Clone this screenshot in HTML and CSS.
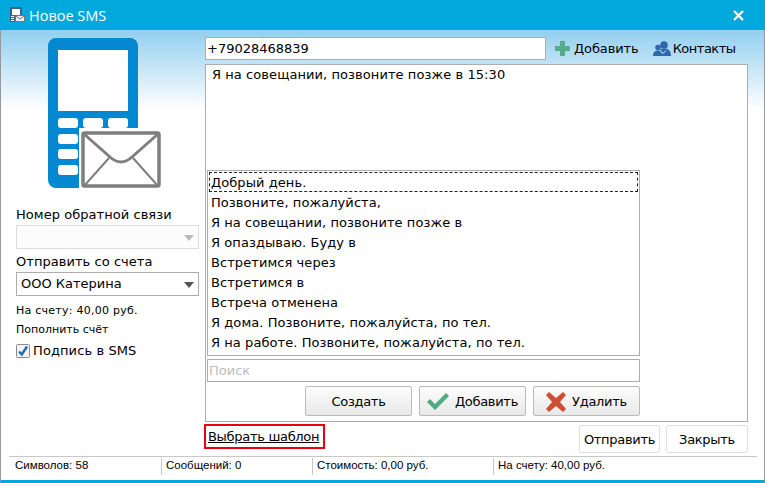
FILE: index.html
```html
<!DOCTYPE html>
<html lang="ru">
<head>
    <meta charset="UTF-8">
    <title>Новое SMS</title>
    <link rel="stylesheet" href="styles.css">
</head>
<body>
<div class="window">
    <div class="titlebar">
        <svg class="title-icon" width="16" height="16" viewBox="0 0 16 16">
            <rect x="0" y="0" width="12" height="15" rx="1" fill="#3b5f94"/>
            <rect x="2" y="2" width="8" height="6" fill="#fff"/>
            <rect x="1" y="9" width="3" height="1" fill="#fff"/>
            <rect x="1" y="11" width="3" height="1" fill="#fff"/>
            <rect x="1" y="13" width="3" height="1" fill="#fff"/>
            <rect x="5.500" y="8.500" width="9" height="6" fill="#eee" stroke="#777"/>
            <path d="M6 9l4 3 4-3" fill="none" stroke="#777"/>
        </svg>
        <span class="title-text">Новое SMS</span>
        <svg class="close-icon" width="11" height="11" viewBox="0 0 11 11">
            <path d="M1 1l9 9M10 1l-9 9" stroke="#fff" stroke-width="2.2" fill="none"/>
        </svg>
    </div>

    <div class="content">
        <div class="left-col">
            <svg class="phone-icon" width="113" height="150" viewBox="0 0 113 150">
                <path d="M8 0H82a8 8 0 0 1 8 8V142a8 8 0 0 1-8 8H8a8 8 0 0 1-8-8V8a8 8 0 0 1 8-8z" fill="#0388d1"/>
                <rect x="10" y="12" width="70" height="61" fill="#fff"/>
                <rect x="10" y="80" width="20" height="10" rx="3" fill="#fff"/>
                <rect x="35" y="80" width="20" height="10" rx="3" fill="#fff"/>
                <rect x="60" y="80" width="20" height="10" rx="3" fill="#fff"/>
                <rect x="10" y="96" width="20" height="10" rx="3" fill="#fff"/>
                <rect x="10" y="111" width="20" height="10" rx="3" fill="#fff"/>
                <rect x="10" y="127" width="20" height="10" rx="3" fill="#fff"/>
                <rect x="31" y="90" width="60" height="60" fill="#fff"/>
                <rect x="35" y="95" width="76" height="53" rx="1.500" fill="#fff" stroke="#7f7f7f" stroke-width="3.500"/>
                <path d="M36 96L62 119Q73 129 84 119L110 96" fill="none" stroke="#7f7f7f" stroke-width="3"/>
                <path d="M36 148L61 120M110 148L85 120" fill="none" stroke="#7f7f7f" stroke-width="2"/>
            </svg>

            <label class="field-label">Номер обратной связи</label>
            <div class="select select-off"><span class="arrow"></span></div>

            <label class="field-label">Отправить со счета</label>
            <div class="select">ООО Катерина<span class="arrow"></span></div>

            <div class="small-line balance">На счету: 40,00 руб.</div>
            <div class="small-line">Пополнить счёт</div>

            <div class="check-line">
                <svg width="14" height="14" viewBox="0 0 14 14">
                    <rect x="0.500" y="0.500" width="13" height="13" rx="1" fill="#f4f4f4" stroke="#8a8a8a"/>
                    <path d="M3 7.500L5.800 10.500L11 2.500" fill="none" stroke="#1f6fb5" stroke-width="2.400"/>
                </svg>
                Подпись в SMS
            </div>
        </div>

        <div class="right-col">
            <div class="phone-row">
                <input class="phone-input" type="text" value="+79028468839">
                <span class="tool-link tool-add">
                    <svg width="15" height="15" viewBox="0 0 15 15"><path d="M5 0h5v5h5v5h-5v5H5v-5H0V5h5z" fill="#56ab8a"/></svg>
                    Добавить
                </span>
                <span class="tool-link tool-contacts">
                    <svg width="18" height="16" viewBox="0 0 18 16">
                        <circle cx="11" cy="4" r="3.800" fill="#2d67ad"/>
                        <circle cx="5" cy="6.500" r="2.800" fill="#2d67ad"/>
                        <path d="M0 15c0-4 2-5.500 5-5.500s5 1.500 5 5.500z" fill="#2d67ad"/>
                        <path d="M7 8.500c1-1 7-1.500 8 0 2 1 3 3 3 6.500H10c0-3-1-5-3-6.500z" fill="#2d67ad"/>
                        <path d="M7.500 10.500l2.500 2 3-3" fill="none" stroke="#dce9f5" stroke-width="1"/>
                    </svg>
                    Контакты
                </span>
            </div>

            <div class="message-box">
                <div class="message-text">Я на совещании, позвоните позже в 15:30</div>
                <ul class="template-list">
                    <li class="selected">Добрый день.</li>
                    <li>Позвоните, пожалуйста,</li>
                    <li>Я на совещании, позвоните позже в</li>
                    <li>Я опаздываю. Буду в</li>
                    <li>Встретимся через</li>
                    <li>Встретимся в</li>
                    <li>Встреча отменена</li>
                    <li>Я дома. Позвоните, пожалуйста, по тел.</li>
                    <li>Я на работе. Позвоните, пожалуйста, по тел.</li>
                </ul>
                <input class="search-input" type="text" placeholder="Поиск">
                <div class="template-buttons">
                    <button class="btn">Создать</button>
                    <button class="btn">
                        <svg width="22" height="17" viewBox="0 0 22 17"><path d="M0 9l3-3 5 5L19 0l3 3L8 17z" fill="#4fab84"/></svg>
                        Добавить
                    </button>
                    <button class="btn">
                        <svg width="20" height="20" viewBox="0 0 20 20"><path d="M3 0l7 6 7-6 3 3-6 7 6 7-3 3-7-6-7 6-3-3 6-7-6-7z" fill="#cf4f36"/></svg>
                        Удалить
                    </button>
                </div>
            </div>

            <div class="bottom-row">
                <a class="choose-link" href="#">Выбрать шаблон</a>
                <div class="send-buttons">
                    <button class="btn-plain btn-send">Отправить</button>
                    <button class="btn-plain btn-close">Закрыть</button>
                </div>
            </div>
        </div>
    </div>

    <div class="statusbar">
        <div class="cell cell-chars">Символов: 58</div>
        <div class="cell cell-msgs">Сообщений: 0</div>
        <div class="cell cell-cost">Стоимость: 0,00 руб.</div>
        <div class="cell">На счету: 40,00 руб.</div>
    </div>
</div>
</body>
</html>
```

FILE: styles.css
```css
* {
    box-sizing: border-box;
}

body {
    margin: 0;
    font-family: "DejaVu Sans", sans-serif;
    font-size: 13px;
    color: #000;
}

.window {
    width: 765px;
    height: 483px;
    display: flex;
    flex-direction: column;
    background: linear-gradient(#92cfef 0, #fff 80px, #fff 100%) 0 30px no-repeat;
    border-left: 1px solid #999;
    border-right: 1px solid #999;
    border-bottom: 3px solid #00a8dc;
}

.titlebar {
    height: 30px;
    flex: none;
    margin: 0 -1px;
    background: #00a8dc;
    color: #fff;
    display: flex;
    align-items: center;
    padding: 0 21px 0 10px;
}

.title-icon {
    margin-right: 3px;
}

.title-text {
    font-family: "Open Sans", sans-serif;
    font-size: 14.5px;
    flex: 1;
}

.content {
    flex: 1;
    display: flex;
    min-height: 0;
}

.left-col {
    width: 204px;
    flex: none;
    padding: 8px 0 0 15px;
}

.phone-icon {
    display: block;
    margin: 0 0 19px 32px;
}

.field-label {
    display: block;
    line-height: 16px;
    margin-bottom: 2px;
    letter-spacing: 0.05px;
}

.select {
    width: 183px;
    height: 24px;
    background: #fff;
    border: 1px solid #adadad;
    line-height: 21px;
    padding-left: 4px;
    margin-bottom: 5px;
    position: relative;
}

.select-off {
    border-color: #ddd;
    background: #fcfcfc;
}

.arrow {
    position: absolute;
    right: 4px;
    top: 9px;
    border-left: 5px solid transparent;
    border-right: 5px solid transparent;
    border-top: 6px solid #555;
}

.select-off .arrow {
    border-top-color: #bbb;
}

.small-line {
    font-size: 11px;
    line-height: 18px;
    margin-top: 1px;
}

.select + .small-line {
    margin-top: 6px;
}

.balance {
    letter-spacing: 0.25px;
}

.check-line {
    display: flex;
    align-items: center;
    gap: 3px;
    margin-top: 4px;
    letter-spacing: 0.1px;
}

.right-col {
    width: 543px;
    flex: none;
    padding-top: 7px;
}

.phone-row {
    display: flex;
    align-items: center;
    height: 23px;
    margin-bottom: 4px;
}

.phone-input {
    width: 341px;
    height: 23px;
    border: 1px solid #adadad;
    padding: 0 1px;
    font: inherit;
    color: inherit;
    margin-right: 9px;
}

.tool-link {
    display: flex;
    align-items: center;
    gap: 4px;
}

.tool-add {
    margin-right: 14px;
    letter-spacing: -0.1px;
}

.tool-contacts {
    gap: 2px;
    letter-spacing: -0.5px;
}

.message-box {
    height: 358px;
    border: 1px solid #adadad;
    background: #fff;
    padding: 1px;
    display: flex;
    flex-direction: column;
}

.message-text {
    flex: 1;
    padding: 1px 5px;
    letter-spacing: 0.07px;
}

.template-list {
    list-style: none;
    margin: 0 0 3px;
    padding: 1px;
    width: 433px;
    height: 186px;
    border: 1px solid #adadad;
    letter-spacing: 0.07px;
}

.template-list li {
    height: 20px;
    line-height: 21px;
    padding-left: 2px;
    white-space: nowrap;
}

.template-list .selected {
    border: 1px dashed #222;
    line-height: 20px;
    padding-left: 1px;
}

.search-input {
    width: 433px;
    height: 23px;
    border: 1px solid #adadad;
    padding: 0 1px;
    font: inherit;
    flex: none;
}

.search-input::placeholder {
    color: #bbb;
}

.template-buttons {
    display: flex;
    justify-content: flex-end;
    gap: 7px;
    width: 433px;
    margin: 4px 0 4px;
}

.btn {
    width: 107px;
    height: 30px;
    font: inherit;
    color: inherit;
    border: 1px solid #bbb;
    border-radius: 2px;
    background: linear-gradient(#fdfdfd, #e8e8e8);
    display: flex;
    align-items: center;
    justify-content: center;
    gap: 6px;
    padding: 1px 0 0;
    letter-spacing: -0.3px;
}

.bottom-row {
    display: flex;
    justify-content: space-between;
    align-items: flex-start;
    padding-top: 2px;
}

.choose-link {
    margin-left: -1px;
    border: 2px solid #e8000d;
    height: 25px;
    width: 121px;
    line-height: 22px;
    padding-left: 2px;
    color: #000;
    white-space: nowrap;
    letter-spacing: -0.3px;
}

.send-buttons {
    display: flex;
    gap: 6px;
    margin-top: 1px;
}

.btn-plain {
    height: 28px;
    font: inherit;
    color: inherit;
    background: #fff;
    border: 1px solid #e0e0e0;
    border-radius: 2px;
    padding: 0;
    letter-spacing: -0.3px;
}

.btn-send {
    width: 81px;
}

.btn-close {
    width: 82px;
}

.statusbar {
    height: 24px;
    flex: none;
    margin: 0 7px 0 8px;
    border-top: 1px solid #c8c8c8;
    display: flex;
    font-family: "Liberation Sans", sans-serif;
    font-size: 11.5px;
    line-height: 15px;
}

.cell {
    padding-left: 4px;
    height: 17px;
    margin-top: 1px;
    border-left: 1px solid #c8c8c8;
}

.cell-chars {
    width: 152px;
    padding-left: 6px;
    border-left: none;
}

.cell-msgs {
    width: 151px;
}

.cell-cost {
    width: 181px;
}
```
